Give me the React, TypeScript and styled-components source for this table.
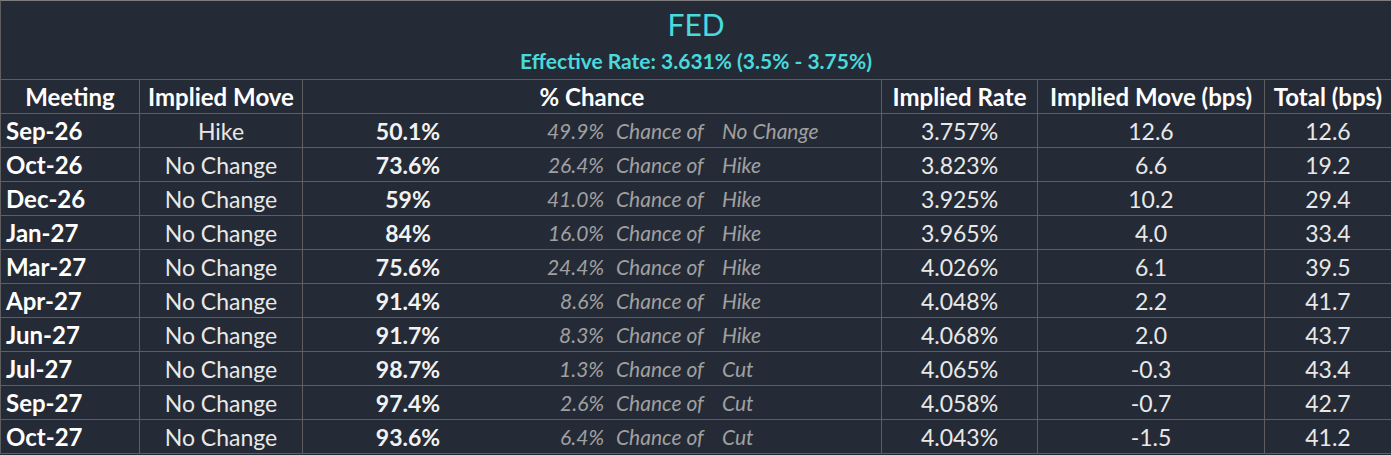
import { FC } from 'react'
import styled, { createGlobalStyle } from 'styled-components'

const GlobalStyle = createGlobalStyle`
  html, body {
    margin: 0;
    padding: 0;
    background: #252b36;
  }
`

interface Meeting {
  date: string,
  move: string,
  chance: string,
  otherChance: string,
  other: string,
  rate: string,
  moveBps: string,
  total: string
}

const meetings: Meeting[] = [
  { date: 'Sep-26', move: 'Hike', chance: '50.1%', otherChance: '49.9%', other: 'No Change', rate: '3.757%', moveBps: '12.6', total: '12.6' },
  { date: 'Oct-26', move: 'No Change', chance: '73.6%', otherChance: '26.4%', other: 'Hike', rate: '3.823%', moveBps: '6.6', total: '19.2' },
  { date: 'Dec-26', move: 'No Change', chance: '59%', otherChance: '41.0%', other: 'Hike', rate: '3.925%', moveBps: '10.2', total: '29.4' },
  { date: 'Jan-27', move: 'No Change', chance: '84%', otherChance: '16.0%', other: 'Hike', rate: '3.965%', moveBps: '4.0', total: '33.4' },
  { date: 'Mar-27', move: 'No Change', chance: '75.6%', otherChance: '24.4%', other: 'Hike', rate: '4.026%', moveBps: '6.1', total: '39.5' },
  { date: 'Apr-27', move: 'No Change', chance: '91.4%', otherChance: '8.6%', other: 'Hike', rate: '4.048%', moveBps: '2.2', total: '41.7' },
  { date: 'Jun-27', move: 'No Change', chance: '91.7%', otherChance: '8.3%', other: 'Hike', rate: '4.068%', moveBps: '2.0', total: '43.7' },
  { date: 'Jul-27', move: 'No Change', chance: '98.7%', otherChance: '1.3%', other: 'Cut', rate: '4.065%', moveBps: '-0.3', total: '43.4' },
  { date: 'Sep-27', move: 'No Change', chance: '97.4%', otherChance: '2.6%', other: 'Cut', rate: '4.058%', moveBps: '-0.7', total: '42.7' },
  { date: 'Oct-27', move: 'No Change', chance: '93.6%', otherChance: '6.4%', other: 'Cut', rate: '4.043%', moveBps: '-1.5', total: '41.2' },
]

const headers = ['Meeting', 'Implied Move', '% Chance', 'Implied Rate', 'Implied Move (bps)', 'Total (bps)']

const Sheet = styled.div`
  width: 1391px;
  background: #252b36;
  font-family: Lato, "Open Sans", sans-serif;
  border-bottom: 1px solid #5e5e5e;
`

const Title = styled.div`
  height: 78px;
  border-top: 1px solid #7d7d7d;
  border-left: 1px solid #5e5e5e;
  display: flex;
  flex-direction: column;
  align-items: center;
  color: #48dadc;
`

const Heading = styled.div`
  margin-top: 4px;
  font-size: 30px;
  line-height: 38px;
`

const Subheading = styled.div`
  margin-top: 3px;
  font-size: 21px;
  font-weight: 700;
  line-height: 30px;
`

const Grid = styled.div`
  display: grid;
  grid-template-columns: 139px 163px 579px 156px 227px 127px;
  grid-auto-rows: 34px;
`

const Cell = styled.div`
  box-sizing: border-box;
  border-top: 1px solid #5e5e5e;
  border-left: 1px solid #5e5e5e;
  display: flex;
  align-items: center;
  justify-content: center;
  font-size: 23px;
  color: #e8e8e8;
  white-space: nowrap;
`

const HeaderCell = styled(Cell)`
  font-size: 24px;
  font-weight: 700;
  color: #ffffff;
`

const DateCell = styled(Cell)`
  justify-content: flex-start;
  padding-left: 5px;
  font-size: 24px;
  font-weight: 700;
  color: #ffffff;
`

const ChanceCell = styled(Cell)`
  justify-content: flex-start;
`

const MainChance = styled.span`
  width: 210px;
  text-align: center;
  font-weight: 700;
  color: #f2f2f2;
`

const Aside = styled.span<{ $width: number, $align?: 'left' | 'right', $inset?: number }>`
  width: ${({ $width }) => $width}px;
  box-sizing: border-box;
  padding-left: ${({ $inset }) => $inset ?? 0}px;
  text-align: ${({ $align }) => $align ?? 'left'};
  font-size: 21px;
  font-style: italic;
  color: #a0a0a0;
`

const Row: FC<{ m: Meeting }> = ({ m }) => <>
  <DateCell>{m.date}</DateCell>
  <Cell>{m.move}</Cell>
  <ChanceCell>
    <MainChance>{m.chance}</MainChance>
    <Aside $width={91} $align='right'>{m.otherChance}</Aside>
    <Aside $width={118} $inset={12}>Chance of</Aside>
    <Aside $width={150}>{m.other}</Aside>
  </ChanceCell>
  <Cell>{m.rate}</Cell>
  <Cell>{m.moveBps}</Cell>
  <Cell>{m.total}</Cell>
</>

export default function App() {
  return <>
    <GlobalStyle />
    <Sheet>
      <Title>
        <Heading>FED</Heading>
        <Subheading>Effective Rate: 3.631% (3.5% - 3.75%)</Subheading>
      </Title>
      <Grid>
        {headers.map(h => <HeaderCell key={h}>{h}</HeaderCell>)}
        {meetings.map(m => <Row key={m.date} m={m} />)}
      </Grid>
    </Sheet>
  </>
}
